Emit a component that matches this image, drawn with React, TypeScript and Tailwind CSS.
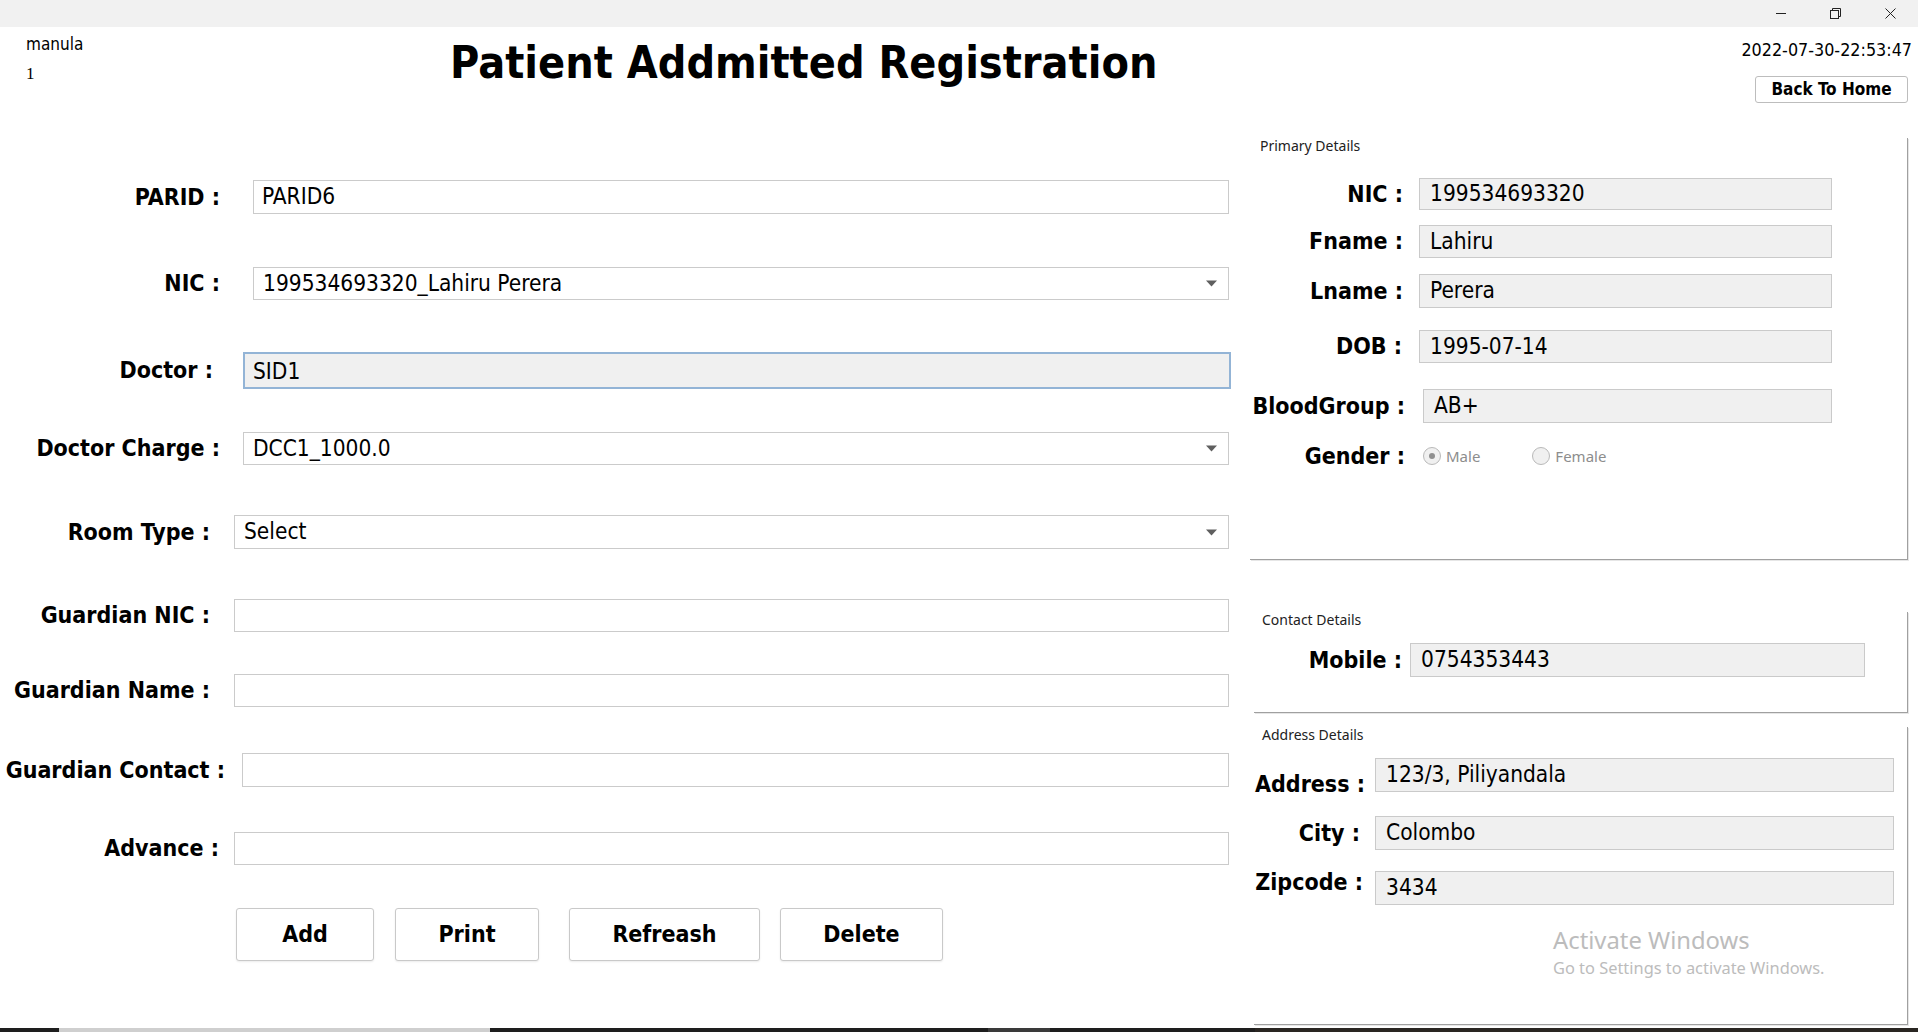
import { useState } from 'react';

const T = "font-['DejaVu_Sans_Condensed','DejaVu_Sans',sans-serif]";
const S = "font-['Noto_Sans','Open_Sans',sans-serif]";

const formRows = [
  { label: 'PARID :', row: 'mt-[60px] h-[34px]', lab: 'w-[220px]', box: 'ml-[33px] w-[976px]', value: 'PARID6', kind: 'input' },
  { label: 'NIC :', row: 'mt-[53px] h-[33px]', lab: 'w-[220px]', box: 'ml-[33px] w-[976px]', value: '199534693320_Lahiru Perera', kind: 'combo' },
  { label: 'Doctor :', row: 'mt-[52px] h-[37px]', lab: 'w-[213px]', box: 'ml-[30px] w-[988px]', value: 'SID1', kind: 'focus' },
  { label: 'Doctor Charge :', row: 'mt-[43px] h-[33px]', lab: 'w-[220px]', box: 'ml-[23px] w-[986px]', value: 'DCC1_1000.0', kind: 'combo' },
  { label: 'Room Type :', row: 'mt-[50px] h-[34px]', lab: 'w-[210px]', box: 'ml-[24px] w-[995px]', value: 'Select', kind: 'combo' },
  { label: 'Guardian NIC :', row: 'mt-[50px] h-[33px]', lab: 'w-[210px]', box: 'ml-[24px] w-[995px]', value: '', kind: 'input' },
  { label: 'Guardian Name :', row: 'mt-[42px] h-[33px]', lab: 'w-[210px]', box: 'ml-[24px] w-[995px]', value: '', kind: 'input' },
  { label: 'Guardian Contact :', row: 'mt-[46px] h-[34px]', lab: 'w-[225px]', box: 'ml-[17px] w-[987px]', value: '', kind: 'input' },
  { label: 'Advance :', row: 'mt-[45px] h-[33px]', lab: 'w-[219px]', box: 'ml-[15px] w-[995px]', value: '', kind: 'input' },
];

const buttons = [
  { text: 'Add', cls: 'ml-[236px] w-[138px]' },
  { text: 'Print', cls: 'ml-[21px] w-[144px]' },
  { text: 'Refreash', cls: 'ml-[30px] w-[191px]' },
  { text: 'Delete', cls: 'ml-[20px] w-[163px]' },
];

const primary = [
  { label: 'NIC :', row: 'mt-[24px] h-[32px]', lab: 'w-[153px]', box: 'ml-[16px] w-[413px]', value: '199534693320' },
  { label: 'Fname :', row: 'mt-[15px] h-[33px]', lab: 'w-[153px]', box: 'ml-[16px] w-[413px]', value: 'Lahiru' },
  { label: 'Lname :', row: 'mt-[16px] h-[34px]', lab: 'w-[153px]', box: 'ml-[16px] w-[413px]', value: 'Perera' },
  { label: 'DOB :', row: 'mt-[22px] h-[33px]', lab: 'w-[152px]', box: 'ml-[17px] w-[413px]', value: '1995-07-14' },
  { label: 'BloodGroup :', row: 'mt-[26px] h-[34px]', lab: 'w-[155px]', box: 'ml-[18px] w-[409px]', value: 'AB+' },
];

function Arrow() {
  return (
    <svg width="11" height="7" viewBox="0 0 11 7" className="shrink-0">
      <path d="M0 0.5h11L5.5 6.5z" fill="#5f5f5f" />
    </svg>
  );
}

function Radio({ checked, text }: { checked?: boolean; text: string }) {
  return (
    <div className="flex items-center">
      <span className="w-[18px] h-[18px] rounded-full border border-[#b9b9b9] bg-[#f0f0f0] flex items-center justify-center">
        {checked && <span className="w-[6px] h-[6px] rounded-full bg-[#8f8f8f]" />}
      </span>
      <span className={`${S} ml-[5px] text-[15px] text-[#8d8d8d]`}>{text}</span>
    </div>
  );
}

function ReadField({ cls, value }: { cls: string; value: string }) {
  return (
    <div className={`${cls} h-full bg-[#f0f0f0] border border-[#cacaca] flex items-center pl-[10px] ${T} text-[22.5px] text-black`}>
      {value}
    </div>
  );
}

export default function App() {
  const [doctor, setDoctor] = useState('SID1');

  return (
    <div className="relative w-[1918px] h-[1032px] bg-white overflow-hidden text-black">
      {/* window title bar */}
      <div className="h-[27px] bg-[#f1f1f1] flex items-center justify-end">
        <div className="w-[10px] h-px bg-[#222] mr-[44px]" />
        <svg width="11" height="11" viewBox="0 0 11 11" className="mr-[44px]">
          <rect x="0.5" y="2.5" width="8" height="8" fill="none" stroke="#222" />
          <path d="M2.5 2.5V0.5h8v8h-2" fill="none" stroke="#222" />
        </svg>
        <svg width="11" height="11" viewBox="0 0 11 11" className="mr-[22px]">
          <path d="M0.5 0.5l10 10M10.5 0.5l-10 10" stroke="#222" />
        </svg>
      </div>

      <div className="flex">
        {/* left form */}
        <div className="w-[1245px] shrink-0">
          <div className="h-[93px] flex items-start">
            <div className={`${T} pl-[26px] pt-[7px] w-[450px] shrink-0 text-[17px] leading-[20px]`}>
              <div>manula</div>
              <div className="mt-[10px] font-['Liberation_Serif',serif]">1</div>
            </div>
            <h1 className={`${T} font-bold text-[44.5px] leading-[54px] mt-[9px] whitespace-nowrap`}>
              Patient Addmitted Registration
            </h1>
          </div>

          {formRows.map((r) => (
            <div key={r.label} className={`flex items-center ${r.row}`}>
              <div className={`${r.lab} shrink-0 text-right ${T} font-bold text-[23px] whitespace-nowrap`}>{r.label}</div>
              {r.kind === 'focus' ? (
                <input
                  value={doctor}
                  onChange={(e) => setDoctor(e.target.value)}
                  className={`${r.box} h-full bg-[#f0f0f0] border-2 border-[#93b4d6] pl-[8px] ${T} text-[22.5px] outline-none`}
                />
              ) : r.kind === 'combo' ? (
                <div className={`${r.box} h-full bg-white border border-[#cbcbcb] flex items-center justify-between pl-[9px] pr-[11px] ${T} text-[22.5px]`}>
                  <span>{r.value}</span>
                  <Arrow />
                </div>
              ) : (
                <div className={`${r.box} h-full bg-white border border-[#cbcbcb] flex items-center pl-[8px] ${T} text-[22.5px]`}>
                  {r.value}
                </div>
              )}
            </div>
          ))}

          <div className="flex mt-[43px]">
            {buttons.map((b) => (
              <button
                key={b.text}
                className={`${b.cls} h-[53px] bg-white border border-[#c9c9c9] rounded-[3px] shadow-[0_1px_2px_rgba(0,0,0,0.08)] ${T} font-bold text-[23px]`}
              >
                {b.text}
              </button>
            ))}
          </div>
        </div>

        {/* right side */}
        <div className="flex-1 flex flex-col">
          <div className={`${T} self-end mr-[6px] mt-[13px] text-[17.8px] leading-[20px]`}>2022-07-30-22:53:47</div>
          <button className={`self-end mr-[10px] mt-[16px] w-[153px] h-[27px] bg-white border border-[#bdbdbd] rounded-[3px] ${T} font-bold text-[17px]`}>
            Back To Home
          </button>

          {/* primary details */}
          <div className="ml-[5px] w-[658px] mt-[35px] pb-[93px] border-r border-b border-[#a0a0a0] shadow-[1px_1px_0_#e6e6e6]">
            <div className={`${S} pl-[10px] text-[14px] leading-[16px] text-[#222]`}>Primary Details</div>
            {primary.map((r) => (
              <div key={r.label} className={`flex items-center ${r.row}`}>
                <div className={`${r.lab} shrink-0 text-right ${T} font-bold text-[23px] whitespace-nowrap`}>{r.label}</div>
                <ReadField cls={r.box} value={r.value} />
              </div>
            ))}
            <div className="flex items-center mt-[23px] h-[20px]">
              <div className={`w-[155px] shrink-0 text-right ${T} font-bold text-[23px] whitespace-nowrap`}>Gender :</div>
              <div className="ml-[18px]">
                <Radio checked text="Male" />
              </div>
              <div className="ml-[52px]">
                <Radio text="Female" />
              </div>
            </div>
          </div>

          {/* contact details */}
          <div className="ml-[9px] w-[654px] mt-[52px] pb-[35px] border-r border-b border-[#a0a0a0] shadow-[1px_1px_0_#e6e6e6]">
            <div className={`${S} pl-[8px] text-[14px] leading-[16px] text-[#222]`}>Contact Details</div>
            <div className="flex items-center mt-[15px] h-[34px]">
              <div className={`w-[148px] shrink-0 text-right ${T} font-bold text-[23px]`}>Mobile :</div>
              <ReadField cls="ml-[8px] w-[455px]" value="0754353443" />
            </div>
          </div>

          {/* address details */}
          <div className="ml-[9px] w-[654px] mt-[14px] pb-[119px] border-r border-b border-[#a0a0a0] shadow-[1px_1px_0_#e6e6e6]">
            <div className={`${S} pl-[8px] text-[14px] leading-[16px] text-[#222]`}>Address Details</div>
            <div className="flex items-center mt-[15px] h-[34px]">
              <div className={`w-[111px] shrink-0 text-right pt-[18px] ${T} font-bold text-[23px]`}>Address :</div>
              <ReadField cls="ml-[10px] w-[519px]" value="123/3, Piliyandala" />
            </div>
            <div className="flex items-center mt-[24px] h-[34px]">
              <div className={`w-[106px] shrink-0 text-right ${T} font-bold text-[23px]`}>City :</div>
              <ReadField cls="ml-[15px] w-[519px]" value="Colombo" />
            </div>
            <div className="flex items-center mt-[21px] h-[34px]">
              <div className={`w-[109px] shrink-0 text-right pb-[12px] ${T} font-bold text-[23px]`}>Zipcode :</div>
              <ReadField cls="ml-[12px] w-[519px]" value="3434" />
            </div>
          </div>
        </div>
      </div>

      {/* activation watermark */}
      <div className={`absolute left-[1553px] top-[925px] ${S} text-[#bcbcbc] pointer-events-none`}>
        <div className="text-[23.8px] leading-[30px]">Activate Windows</div>
        <div className="text-[16.4px] leading-[20px] mt-[3px]">Go to Settings to activate Windows.</div>
      </div>

      {/* taskbar edge */}
      <div className="absolute left-0 bottom-0 w-full h-[4px] flex bg-[#1e1e1e]">
        <div className="ml-[59px] w-[431px] bg-[#cfcfcf]" />
        <div className="ml-[498px] w-[62px] bg-[#3a3a3a]" />
        <div className="ml-[205px] flex-1 bg-[#2a2622]" />
      </div>
    </div>
  );
}
